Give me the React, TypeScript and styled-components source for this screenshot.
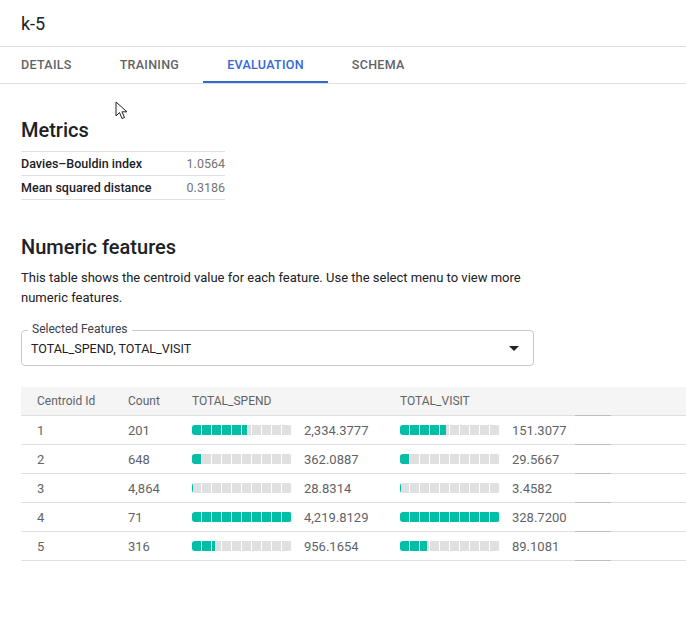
import styled, { createGlobalStyle } from 'styled-components';

const GlobalStyle = createGlobalStyle`
  body {
    margin: 0;
    font-family: Roboto, 'Liberation Sans', Arial, sans-serif;
    color: #202124;
    background: #fff;
    overflow: hidden;
  }
`;

const Page = styled.div`
  position: relative;
  width: 686px;
  height: 636px;
  overflow: hidden;
`;

const Header = styled.div`
  height: 46px;
  display: flex;
  align-items: center;
  padding: 0 21px;
  border-bottom: 1px solid #e0e0e0;
  font-size: 18px;
  color: #202124;
`;

const TabBar = styled.div`
  display: flex;
  height: 36px;
  border-bottom: 1px solid #e0e0e0;
`;

const Tab = styled.div<{ $active?: boolean; $first?: boolean }>`
  display: flex;
  align-items: center;
  padding: 0 24px 2px ${(p) => (p.$first ? '21px' : '24px')};
  font-size: 12.5px;
  font-weight: 500;
  letter-spacing: 0.3px;
  color: ${(p) => (p.$active ? '#3367d6' : '#5f6368')};
  box-shadow: ${(p) => (p.$active ? 'inset 0 -2px 0 #3367d6' : 'none')};
`;

const Content = styled.div`
  padding: 0 0 0 21px;
`;

const Heading = styled.h2<{ $top: number }>`
  margin: ${(p) => p.$top}px 0 0;
  font-size: 20px;
  line-height: 24px;
  font-weight: 500;
  color: #202124;
`;

const MetricsTable = styled.div`
  width: 204px;
  margin-top: 9px;
  border-top: 1px solid #e0e0e0;
`;

const MetricRow = styled.div`
  display: flex;
  justify-content: space-between;
  align-items: center;
  height: 23px;
  border-bottom: 1px solid #e0e0e0;
  font-size: 12.5px;
`;

const MetricLabel = styled.span`
  font-weight: 500;
  color: #202124;
`;

const MetricValue = styled.span`
  color: #757575;
`;

const Description = styled.p`
  margin: 9px 0 0;
  width: 510px;
  font-size: 13px;
  line-height: 20px;
  color: #202124;
`;

const SelectBox = styled.div`
  position: relative;
  margin-top: 22px;
  width: 488px;
  height: 34px;
  border: 1px solid #c8c8c8;
  border-radius: 4px;
  display: flex;
  align-items: center;
  justify-content: space-between;
  padding: 0 14px 0 9px;
  font-size: 12.5px;
  color: #202124;
`;

const SelectLabel = styled.span`
  position: absolute;
  top: -9px;
  left: 6px;
  padding: 0 4px;
  background: #fff;
  font-size: 12px;
  line-height: 14px;
  color: #3c4043;
`;

const Arrow = styled.span`
  width: 0;
  height: 0;
  border-left: 5px solid transparent;
  border-right: 5px solid transparent;
  border-top: 5px solid #202124;
`;

const Table = styled.div`
  margin-top: 21px;
`;

const columns = '91px 64px 208px 191px 36px 1fr';

const HeadRow = styled.div`
  display: grid;
  grid-template-columns: ${columns};
  height: 28px;
  background: #f5f5f5;
  border-bottom: 1px solid #e0e0e0;
  font-size: 12px;
  color: #5f6368;
`;

const BodyRow = styled.div`
  display: grid;
  grid-template-columns: ${columns};
  height: 28px;
  border-bottom: 1px solid #e0e0e0;
  font-size: 13px;
  color: #5f6368;
`;

const Cell = styled.div`
  display: flex;
  align-items: center;
  padding-left: 16px;
  white-space: nowrap;
`;

const Handle = styled.div`
  margin-bottom: -1px;
  border-bottom: 1px solid #bdbdbd;
  align-self: end;
`;

const BarCell = styled(Cell)`
  gap: 12px;
`;

const Track = styled.div`
  position: relative;
  width: 100px;
  height: 10px;
  border-radius: 3px;
  overflow: hidden;
  background: #e0e0e0;
  flex: none;
  &:after {
    content: '';
    position: absolute;
    inset: 0;
    background: repeating-linear-gradient(
      to right,
      transparent 0 9px,
      #fff 9px 10px
    );
  }
`;

const Fill = styled.div`
  height: 100%;
  background: #00bfa5;
`;

const Cursor = styled.svg`
  position: absolute;
  left: 115px;
  top: 101px;
`;

type Row = { id: number; count: string; spend: number; visit: number };

const rows: Row[] = [
  { id: 1, count: '201', spend: 2334.3777, visit: 151.3077 },
  { id: 2, count: '648', spend: 362.0887, visit: 29.5667 },
  { id: 3, count: '4,864', spend: 28.8314, visit: 3.4582 },
  { id: 4, count: '71', spend: 4219.8129, visit: 328.72 },
  { id: 5, count: '316', spend: 956.1654, visit: 89.1081 },
];

const maxSpend = Math.max(...rows.map((r) => r.spend));
const maxVisit = Math.max(...rows.map((r) => r.visit));

const fmt = (n: number) =>
  n.toLocaleString('en-US', { minimumFractionDigits: 4, maximumFractionDigits: 4 });

function Bar({ value, max }: { value: number; max: number }) {
  return (
    <Track>
      <Fill style={{ width: `${(value / max) * 100}%` }} />
    </Track>
  );
}

export default function App() {
  return (
    <Page>
      <GlobalStyle />
      <Header>k-5</Header>
      <TabBar>
        <Tab $first>DETAILS</Tab>
        <Tab>TRAINING</Tab>
        <Tab $active>EVALUATION</Tab>
        <Tab>SCHEMA</Tab>
      </TabBar>
      <Content>
        <Heading $top={34}>Metrics</Heading>
        <MetricsTable>
          <MetricRow>
            <MetricLabel>Davies–Bouldin index</MetricLabel>
            <MetricValue>1.0564</MetricValue>
          </MetricRow>
          <MetricRow>
            <MetricLabel>Mean squared distance</MetricLabel>
            <MetricValue>0.3186</MetricValue>
          </MetricRow>
        </MetricsTable>

        <Heading $top={35}>Numeric features</Heading>
        <Description>
          This table shows the centroid value for each feature. Use the select menu to view more
          numeric features.
        </Description>
        <SelectBox>
          <SelectLabel>Selected Features</SelectLabel>
          <span>TOTAL_SPEND, TOTAL_VISIT</span>
          <Arrow />
        </SelectBox>

        <Table>
          <HeadRow>
            <Cell>Centroid Id</Cell>
            <Cell>Count</Cell>
            <Cell>TOTAL_SPEND</Cell>
            <Cell>TOTAL_VISIT</Cell>
            <Handle />
            <Cell />
          </HeadRow>
          {rows.map((r) => (
            <BodyRow key={r.id}>
              <Cell>{r.id}</Cell>
              <Cell>{r.count}</Cell>
              <BarCell>
                <Bar value={r.spend} max={maxSpend} />
                {fmt(r.spend)}
              </BarCell>
              <BarCell>
                <Bar value={r.visit} max={maxVisit} />
                {fmt(r.visit)}
              </BarCell>
              <Handle />
              <Cell />
            </BodyRow>
          ))}
        </Table>
      </Content>
      <Cursor width="14" height="20" viewBox="0 0 14 20">
        <path
          d="M1 1 L1 15 L4.5 11.5 L7 17.5 L9.5 16.5 L7 10.8 L12 10.8 Z"
          fill="#fff"
          stroke="#202124"
          strokeWidth="1"
          strokeLinejoin="round"
        />
      </Cursor>
    </Page>
  );
}
